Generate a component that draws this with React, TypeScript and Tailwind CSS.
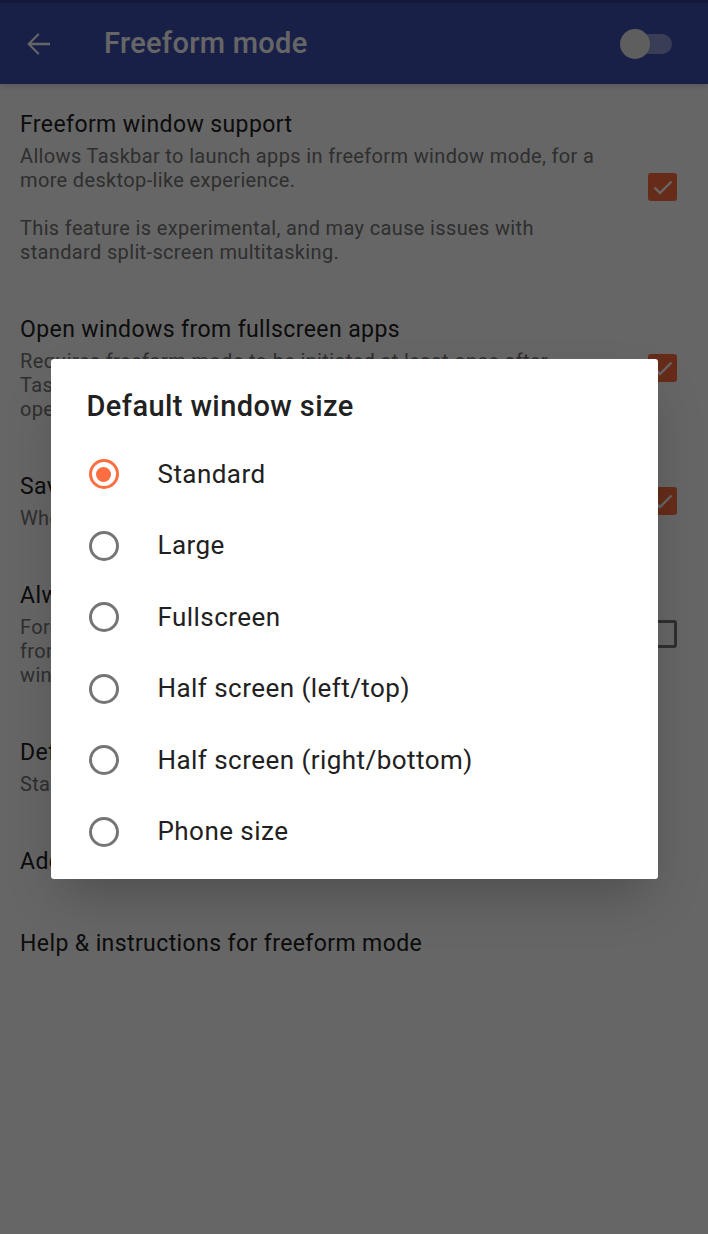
import React from "react";

interface Pref {
    title: string;
    summary?: string[];
    checkbox?: "on" | "off";
}

const prefs: Pref[] = [
    {
        title: "Freeform window support",
        summary: [
            "Allows Taskbar to launch apps in freeform window mode, for a",
            "more desktop-like experience.",
            "",
            "This feature is experimental, and may cause issues with",
            "standard split-screen multitasking.",
        ],
        checkbox: "on",
    },
    {
        title: "Open windows from fullscreen apps",
        summary: [
            "Requires freeform mode to be initiated at least once after",
            "Taskbar is started, by launching an app from the taskbar",
            "open in a freeform window",
        ],
        checkbox: "on",
    },
    {
        title: "Save window sizes",
        summary: ["When enabled, apps will reopen at their last used size"],
        checkbox: "on",
    },
    {
        title: "Always launch apps in new windows",
        summary: [
            "Forces apps to open in new windows, even when launched",
            "from the home screen or another app, instead of reusing",
            "windows that are already open",
        ],
        checkbox: "off",
    },
    { title: "Default window size", summary: ["Standard"] },
    { title: "Additional settings" },
    { title: "Help & instructions for freeform mode" },
];

const sizes = [
    "Standard",
    "Large",
    "Fullscreen",
    "Half screen (left/top)",
    "Half screen (right/bottom)",
    "Phone size",
];

const Checkbox = ({ checked }: { checked: boolean }) =>
    checked ? (
        <div className="w-[29px] h-[28px] rounded-[3px] bg-[#FF6E40] flex items-center justify-center">
            <svg width="24" height="24" viewBox="0 0 24 24">
                <path d="M3.5 12.5l5.5 5.5L20.5 6.5" fill="none" stroke="#ffffff" strokeWidth="2.4" />
            </svg>
        </div>
    ) : (
        <div className="w-[29px] h-[28px] rounded-[3px] border-[3px] border-[#757575]" />
    );

const Radio = ({ selected }: { selected: boolean }) => (
    <div
        className={
            selected
                ? "w-[30px] h-[30px] rounded-full border-[3px] border-[#FF6E40] flex items-center justify-center"
                : "w-[30px] h-[30px] rounded-full border-[3px] border-[#757575]"
        }
    >
        {selected && <div className="w-[15px] h-[15px] rounded-full bg-[#FF6E40]" />}
    </div>
);

export default function App() {
    return (
        <div className="relative w-[708px] h-[1234px] bg-white overflow-hidden font-[Roboto,sans-serif]">
            {/* toolbar */}
            <header className="h-[84px] bg-[#3F51B5] border-t-[3px] border-[#32408f] flex items-center shadow-md relative z-10">
                <svg className="ml-[20px]" width="36" height="36" viewBox="0 0 24 24" fill="#ffffff">
                    <path d="M20 11.2H7.6l5.4-5.4-1-1L4.8 12l7.2 7.2 1-1-5.4-5.4H20z" />
                </svg>
                <h1 className="ml-[48px] text-white text-[29px] tracking-[0.3px] font-medium">Freeform mode</h1>
                <div className="ml-auto mr-[36px] relative w-[52px] h-[30px] flex items-center">
                    <div className="absolute left-[10px] right-0 h-[20px] rounded-full bg-[#8f99d6]" />
                    <div className="absolute left-0 w-[30px] h-[30px] rounded-full bg-[#ececec]" />
                </div>
            </header>

            {/* preference list */}
            <main>
                {prefs.map((p) => (
                    <div key={p.title} className="flex items-center py-[25px] pl-[20px] pr-[31px]">
                        <div className="flex-1">
                            <div className="text-[23px] tracking-[0.4px] leading-[32px] text-[#212121]">{p.title}</div>
                            {p.summary && (
                                <div className="mt-[3px] text-[20px] tracking-[0.35px] leading-[24px] text-[#757575]">
                                    {p.summary.map((line, i) => (
                                        <div key={i} className="h-[24px] whitespace-nowrap">{line}</div>
                                    ))}
                                </div>
                            )}
                        </div>
                        {p.checkbox && <Checkbox checked={p.checkbox === "on"} />}
                    </div>
                ))}
            </main>

            {/* dim + dialog */}
            <div className="absolute inset-0 z-20 bg-black/60 flex items-center justify-center pt-[4px]">
                <div className="w-[607px] bg-white rounded-[3px] shadow-2xl pt-[29px] pb-[11px]">
                    <h2 className="pl-[36px] text-[29px] tracking-[0.4px] leading-[36px] font-medium text-[#212121]">
                        Default window size
                    </h2>
                    <div className="mt-[14px]">
                        {sizes.map((s, i) => (
                            <div key={s} className="h-[71.6px] flex items-center pl-[38px]">
                                <Radio selected={i === 0} />
                                <span className="ml-[39px] text-[26px] tracking-[0.45px] text-[#212121]">{s}</span>
                            </div>
                        ))}
                    </div>
                </div>
            </div>
        </div>
    );
}
